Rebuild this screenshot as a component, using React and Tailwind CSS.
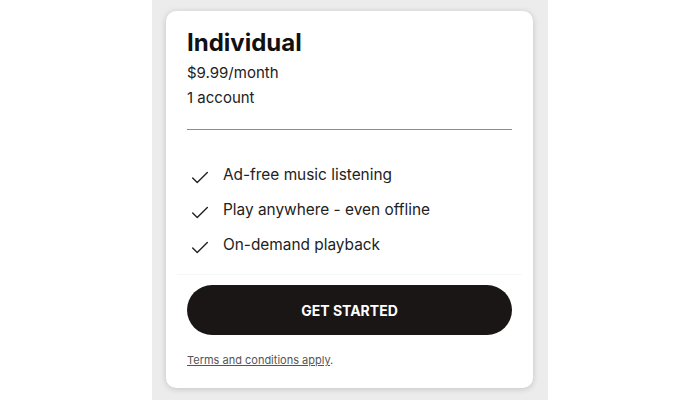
import { Check } from 'lucide-react';

const features = ['Ad-free music listening', 'Play anywhere - even offline', 'On-demand playback'];

export default function App() {
  return (
    <div className="w-[700px] h-[400px] bg-white flex justify-center overflow-hidden" style={{ fontFamily: 'Inter, "Open Sans", sans-serif' }}>
      <div className="w-[396px] h-full bg-[#ececec] pt-[11px] pl-[14px]">
        <div className="w-[367px] h-[377px] bg-white rounded-[10px] shadow-[0_1px_6px_rgba(0,0,0,0.18)] px-[21px] pt-[18px] flex flex-col">
          <h2 className="text-[24px] font-bold text-[#111] leading-[28px]">Individual</h2>
          <p className="text-[15px] text-[#222] mt-[6px] leading-[20px]">$9.99/month</p>
          <p className="text-[15px] text-[#222] mt-[5px] leading-[20px]">1 account</p>
          <div className="h-px bg-[#8a8a8a] mt-[21px]" />
          <ul className="mt-[35px] flex flex-col gap-[15px] pb-[19px] border-b border-[#f6f6f6] -mx-[10px] px-[10px]">
            {features.map((f) => (
              <li key={f} className="flex items-center gap-[12px] h-[20px] text-[15.4px] text-[#222]">
                <Check className="w-[22px] h-[22px] mt-[6px] ml-[2px]" strokeWidth={1.5} />
                <span>{f}</span>
              </li>
            ))}
          </ul>
          <button className="mt-[10px] h-[50px] w-full rounded-full bg-[#1a1616] text-white text-[14px] font-bold">
            GET STARTED
          </button>
          <p className="mt-[17px] text-[11px] text-[#555]">
            <span className="underline">Terms and conditions apply</span>.
          </p>
        </div>
      </div>
    </div>
  );
}
